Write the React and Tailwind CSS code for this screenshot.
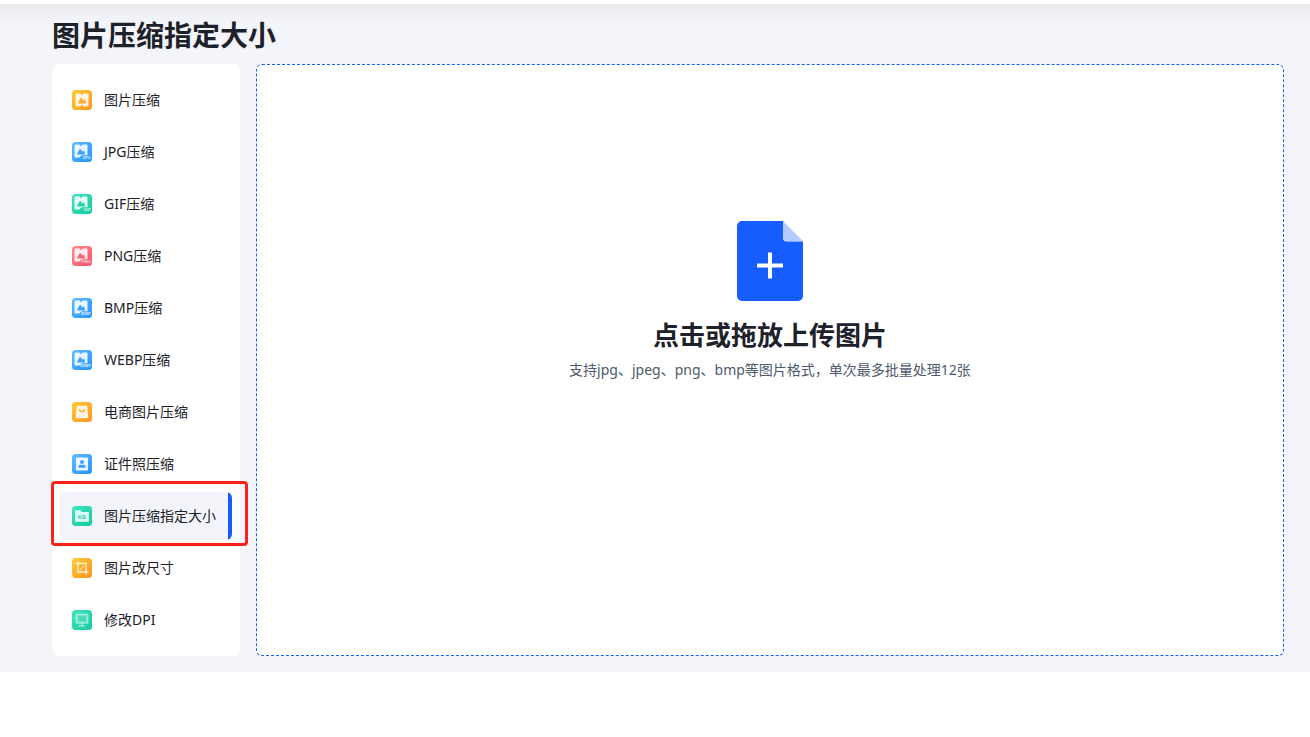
import React from "react";

const GRADIENTS = {
  orange: ["#ffcb35", "#ff9422"],
  blue: ["#63bdff", "#2492ff"],
  green: ["#3fe6c0", "#18c9a0"],
  red: ["#ff8f8a", "#f9506c"],
};

function Photo({ tag }) {
  return (
    <>
      <g transform={tag ? "translate(-1 -1)" : undefined}>
        <path
          d="M4.500 3.600h4.200a1.300 1.300 0 0 0 2.600 0h4.200a1 1 0 0 1 1 1v10.800a1 1 0 0 1-1 1h-4.200a1.300 1.300 0 0 0-2.600 0H4.500a1 1 0 0 1-1-1V4.600a1 1 0 0 1 1-1z"
          fill="#fff"
          fillOpacity=".88"
        />
        <path d="M5.800 13.500 8.700 8q.4-.6.8 0l1.800 2.500.8-.8q.5-.4.900.1l1.400 3.700z" fill="currentColor" />
      </g>
      {tag && (
        <>
          <rect x="9.600" y="13.200" width="9.400" height="4.600" fill="currentColor" />
          <text
            x="18.800"
            y="17.200"
            textAnchor="end"
            fontSize={tag.length > 3 ? 3.6 : 4.4}
            fontWeight="700"
            fontFamily="Liberation Sans, sans-serif"
            fill="#fff"
            fillOpacity=".75"
          >
            {tag}
          </text>
        </>
      )}
    </>
  );
}

function Bag() {
  return (
    <>
      <path d="M4.800 3.800h10.400l1.100 12.400H3.700z" fill="#fff" fillOpacity=".87" />
      <path d="M7.500 7.600a2.500 2 0 0 0 5 0" fill="none" stroke="currentColor" strokeWidth="1.400" strokeLinecap="round" />
    </>
  );
}

function IdPhoto() {
  return (
    <>
      <rect x="4" y="3.500" width="12" height="13" rx=".8" fill="#fff" fillOpacity=".9" />
      <circle cx="10" cy="7.900" r="2" fill="currentColor" />
      <path d="M6.500 13.800v-1.300c0-1 .8-1.700 1.800-1.700h3.400c1 0 1.800.7 1.800 1.700v1.300z" fill="currentColor" />
    </>
  );
}

function Folder() {
  return (
    <>
      <path d="M3 5a.8.8 0 0 1 .8-.8h4.400l1.600 1.800h6.400a.8.8 0 0 1 .8.8v8.200a.8.8 0 0 1-.8.8H3.800a.8.8 0 0 1-.8-.8z" fill="#fff" fillOpacity=".84" />
      <text x="10" y="13" textAnchor="middle" fontSize="5.600" fontWeight="700" fontFamily="Liberation Sans, sans-serif" fill="currentColor">
        KB
      </text>
    </>
  );
}

function Crop() {
  return (
    <g fill="none" stroke="#fff" strokeOpacity=".82">
      <path d="M6 3.500V14h10.500M3.800 5.500H14v11" strokeWidth="1.300" />
      <path d="m8 12 4-4" strokeWidth="1" />
    </g>
  );
}

function Monitor() {
  return (
    <>
      <rect x="4" y="4.200" width="12" height="9" rx=".5" fill="#fff" fillOpacity=".35" stroke="#fff" strokeOpacity=".55" />
      <rect x="6.200" y="6.200" width="7.600" height="5" fill="currentColor" fillOpacity=".6" />
      <path d="M10 13.400v2.200M6.500 16h7" stroke="#fff" strokeOpacity=".7" strokeWidth="1.200" />
    </>
  );
}

const ITEMS = [
  { label: "图片压缩", tone: "orange", glyph: <Photo /> },
  { label: "JPG压缩", tone: "blue", glyph: <Photo tag="JPG" /> },
  { label: "GIF压缩", tone: "green", glyph: <Photo tag="GIF" /> },
  { label: "PNG压缩", tone: "red", glyph: <Photo tag="PNG" /> },
  { label: "BMP压缩", tone: "blue", glyph: <Photo tag="BMP" /> },
  { label: "WEBP压缩", tone: "blue", glyph: <Photo tag="WEBP" /> },
  { label: "电商图片压缩", tone: "orange", glyph: <Bag /> },
  { label: "证件照压缩", tone: "blue", glyph: <IdPhoto /> },
  { label: "图片压缩指定大小", tone: "green", glyph: <Folder />, active: true },
  { label: "图片改尺寸", tone: "orange", glyph: <Crop /> },
  { label: "修改DPI", tone: "green", glyph: <Monitor /> },
];

const INK = {
  orange: "text-[#ffa928]",
  blue: "text-[#3ba2ff]",
  green: "text-[#27d3ab]",
  red: "text-[#fb6575]",
};

function ToolIcon({ id, tone, children }) {
  const [from, to] = GRADIENTS[tone];
  return (
    <svg viewBox="0 0 20 20" className={`size-5 shrink-0 ${INK[tone]}`} aria-hidden="true">
      <defs>
        <linearGradient id={id} x1="0" y1="0" x2="1" y2="1">
          <stop stopColor={from} />
          <stop offset="1" stopColor={to} />
        </linearGradient>
      </defs>
      <rect width="20" height="20" rx="3.500" fill={`url(#${id})`} />
      {children}
    </svg>
  );
}

function NavItem({ item, index }) {
  return (
    <li className="relative">
      <a
        href="#"
        aria-current={item.active ? "page" : undefined}
        className={`flex h-12 items-center gap-3 overflow-hidden rounded-md pl-3 text-sm whitespace-nowrap text-[#1d2129] ${
          item.active ? "bg-[#f4f5fa]" : ""
        }`}
      >
        <ToolIcon id={`tool-${index}`} tone={item.tone}>
          {item.glyph}
        </ToolIcon>
        {item.label}
        {item.active && <span className="ml-auto w-1 self-stretch bg-[#165dff]" />}
      </a>
      {item.active && (
        <span className="pointer-events-none absolute -top-[11px] -right-4 -bottom-[6px] -left-[9px] rounded-sm border-3 border-[#fb2018]" />
      )}
    </li>
  );
}

export default function App() {
  return (
    <div className="min-h-screen bg-white pt-1 font-['Noto_Sans','Noto_Sans_CJK_SC',sans-serif] text-[#1d2129]">
      <main className="bg-[#f4f5fa] bg-linear-to-b from-[#e8e9ed] to-[#f4f5fa] to-[18px] pt-[11px] pr-[26px] pb-4 pl-[52px]">
        <h1 className="mb-[9px] text-[28px] leading-10 font-bold">图片压缩指定大小</h1>
        <div className="flex gap-4">
          <nav className="w-[188px] shrink-0 rounded-lg bg-white px-2 py-3">
            <ul className="flex flex-col gap-1">
              {ITEMS.map((item, i) => (
                <NavItem key={item.label} item={item} index={i} />
              ))}
            </ul>
          </nav>
          <label className="flex flex-1 cursor-pointer flex-col items-center rounded-md border border-dashed border-[#165dff] bg-white pt-39">
            <input type="file" accept="image/*" multiple className="sr-only" />
            <svg viewBox="0 0 66 80" className="h-20 w-[66px]" aria-hidden="true">
              <path d="M5 0h41v16.500a4 4 0 0 0 4 4h16V75a5 5 0 0 1-5 5H5a5 5 0 0 1-5-5V5a5 5 0 0 1 5-5z" fill="#165dff" />
              <path d="M46 0l20 20H50a4 4 0 0 1-4-4z" fill="#b5cbff" />
              <path d="M20 44.500h26M33 31.500v26" stroke="#fff" strokeWidth="4" />
            </svg>
            <span className="mt-4 text-[26px] leading-9 font-bold">点击或拖放上传图片</span>
            <span className="mt-[5px] text-sm leading-6 text-[#4e5969]">
              支持jpg、jpeg、png、bmp等图片格式，单次最多批量处理12张
            </span>
          </label>
        </div>
      </main>
    </div>
  );
}
